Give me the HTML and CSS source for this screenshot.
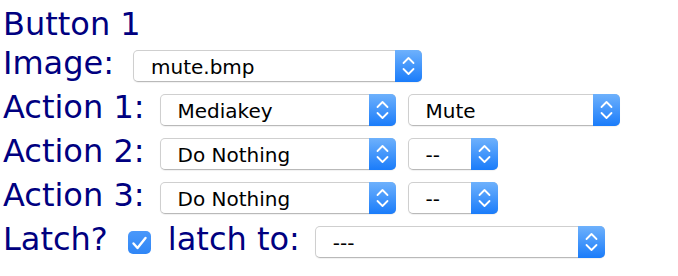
FILE: index.html
```html
<!DOCTYPE html>
<html>
<head>
<meta charset="utf-8">
<link rel="stylesheet" href="styles.css">
</head>
<body>
<div class="form">
  <div class="title">Button 1</div>

  <div class="row">
    <span class="lbl lbl-image">Image:</span>
    <span class="sel w-image"><span class="val">mute.bmp</span><span class="btn"><svg viewBox="0 0 27 32" width="27" height="32"><path d="M8.5 13 L13.5 8 L18.5 13 M8.5 19 L13.5 24 L18.5 19"/></svg></span></span>
  </div>

  <div class="row">
    <span class="lbl">Action 1:</span>
    <span class="sel w-action"><span class="val">Mediakey</span><span class="btn"><svg viewBox="0 0 27 32" width="27" height="32"><path d="M8.5 13 L13.5 8 L18.5 13 M8.5 19 L13.5 24 L18.5 19"/></svg></span></span>
    <span class="sel w-key"><span class="val">Mute</span><span class="btn"><svg viewBox="0 0 27 32" width="27" height="32"><path d="M8.5 13 L13.5 8 L18.5 13 M8.5 19 L13.5 24 L18.5 19"/></svg></span></span>
  </div>

  <div class="row">
    <span class="lbl">Action 2:</span>
    <span class="sel w-action"><span class="val">Do Nothing</span><span class="btn"><svg viewBox="0 0 27 32" width="27" height="32"><path d="M8.5 13 L13.5 8 L18.5 13 M8.5 19 L13.5 24 L18.5 19"/></svg></span></span>
    <span class="sel w-small"><span class="val">--</span><span class="btn"><svg viewBox="0 0 27 32" width="27" height="32"><path d="M8.5 13 L13.5 8 L18.5 13 M8.5 19 L13.5 24 L18.5 19"/></svg></span></span>
  </div>

  <div class="row">
    <span class="lbl">Action 3:</span>
    <span class="sel w-action"><span class="val">Do Nothing</span><span class="btn"><svg viewBox="0 0 27 32" width="27" height="32"><path d="M8.5 13 L13.5 8 L18.5 13 M8.5 19 L13.5 24 L18.5 19"/></svg></span></span>
    <span class="sel w-small"><span class="val">--</span><span class="btn"><svg viewBox="0 0 27 32" width="27" height="32"><path d="M8.5 13 L13.5 8 L18.5 13 M8.5 19 L13.5 24 L18.5 19"/></svg></span></span>
  </div>

  <div class="row">
    <span class="lbl lbl-latch">Latch?</span>
    <span class="check"><svg viewBox="0 0 23 23" width="23" height="23"><path d="M5.5 12.5 L9.5 17 L17.5 7"/></svg></span>
    <span class="lbl lbl-latchto">latch to:</span>
    <span class="sel w-latch"><span class="val">---</span><span class="btn"><svg viewBox="0 0 27 32" width="27" height="32"><path d="M8.5 13 L13.5 8 L18.5 13 M8.5 19 L13.5 24 L18.5 19"/></svg></span></span>
  </div>
</div>
</body>
</html>
```
FILE: styles.css
```css
html, body {
  margin: 0;
  padding: 0;
  background: #ffffff;
}

body {
  font-family: "DejaVu Sans", Verdana, sans-serif;
  font-size: 32px;
  color: #000080;
}

.form {
  padding: 5px 0 0 3px;
}

.title {
  height: 39px;
  line-height: normal;
  white-space: nowrap;
}

.row {
  display: flex;
  align-items: baseline;
  height: 44px;
  white-space: nowrap;
}

.lbl {
  margin-right: 15px;
}

.lbl-image {
  margin-right: 19px;
}

.lbl-latch {
  margin-right: 20px;
}

.sel {
  display: inline-flex;
  box-sizing: border-box;
  height: 32px;
  margin-right: 12px;
  background: #ffffff;
  border: 1px solid #cfcfcf;
  border-bottom-color: #b9b9b9;
  border-radius: 5px;
  box-shadow: 0 1px 1px rgba(0, 0, 0, 0.06);
}

.val {
  flex: 1;
  min-width: 0;
  box-sizing: border-box;
  height: 30px;
  padding: 1px 0 0 17px;
  font-size: 20px;
  line-height: 30px;
  color: #000000;
  overflow: hidden;
}

.btn {
  flex: none;
  width: 27px;
  height: 32px;
  margin: -1px -1px -1px 0;
  border-radius: 0 5px 5px 0;
  background: linear-gradient(#6eb1fc, #1a7cfa);
}

.btn svg {
  display: block;
}

.btn path {
  fill: none;
  stroke: #ffffff;
  stroke-width: 1.8;
  stroke-linecap: round;
  stroke-linejoin: round;
}

.w-image { width: 289px; }
.w-action { width: 236px; }
.w-key { width: 212px; }
.w-small { width: 90px; }
.w-latch { width: 290px; }

.check {
  align-self: center;
  flex: none;
  width: 23px;
  height: 23px;
  margin-right: 17px;
  border-radius: 5px;
  background: linear-gradient(#4a98fa, #2f86f6);
}

.check svg {
  display: block;
}

.check path {
  fill: none;
  stroke: #ffffff;
  stroke-width: 2.4;
  stroke-linecap: round;
  stroke-linejoin: round;
}
```
